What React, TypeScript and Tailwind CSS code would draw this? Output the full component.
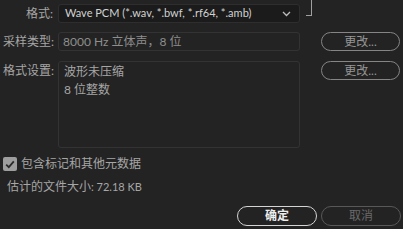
import React from "react";

const font = { fontFamily: 'Lato, "Noto Sans CJK SC", sans-serif' };

export default function App() {
  return (
    <div className="h-[229px] w-[403px] overflow-hidden bg-[#232323] text-[12px] text-[#a6a6a6]" style={font}>
      <div className="flex h-[27px] items-start pt-[4px]">
        <div className="w-[54px] pr-[1px] text-right leading-[19px]">格式:</div>
        <div className="ml-[4px] flex h-[19px] w-[242px] items-center justify-between whitespace-nowrap rounded-[3px] border border-[#2e2e2e] bg-[#1b1b1b] pl-[6px] pr-[8px] text-[11px] text-[#d2d2d2]">
          <span>Wave PCM (*.wav, *.bwf, *.rf64, *.amb)</span>
          <svg width="9" height="6" viewBox="0 0 9 6" fill="none" stroke="#bdbdbd" strokeWidth="1.3">
            <path d="M1 1l3.5 3.5L8 1" />
          </svg>
        </div>
        <div className="-mt-[4px] ml-[6px] h-[16px] w-[6px] border-b border-r border-[#a0a0a0]" />
      </div>

      <div className="mt-[5px] flex h-[19px] items-center">
        <div className="w-[55px] pl-[3px] leading-[19px]">采样类型:</div>
        <div className="ml-[3px] flex h-[19px] w-[242px] items-center whitespace-nowrap rounded-[3px] border border-[#333] pl-[4px] text-[#8e8e8e]">
          8000 Hz 立体声，8 位
        </div>
        <button className="ml-[21px] h-[19px] w-[79px] rounded-full border-[1.5px] border-[#858585] text-[#959595]">
          更改...
        </button>
      </div>

      <div className="mt-[10px] flex items-start">
        <div className="w-[55px] pl-[3px] pt-[1px] leading-[18px]">格式设置:</div>
        <div className="ml-[3px] h-[87px] w-[242px] rounded-[3px] border border-[#333] pl-[5px] pt-[1px] leading-[18px] text-[#a6a6a6]">
          <div>波形未压缩</div>
          <div>8 位整数</div>
        </div>
        <button className="ml-[21px] h-[19px] w-[79px] rounded-full border-[1.5px] border-[#858585] text-[#959595]">
          更改...
        </button>
      </div>

      <div className="mt-[8px] flex items-center pl-[3px]">
        <div className="flex h-[14px] w-[14px] items-center justify-center rounded-[2px] bg-[#9e9e9e]">
          <svg width="10" height="9" viewBox="0 0 10 9" fill="none" stroke="#2a2a2a" strokeWidth="1.8">
            <path d="M1.2 4.6l2.6 2.6L8.8 1.4" />
          </svg>
        </div>
        <span className="ml-[4px] leading-[16px]">包含标记和其他元数据</span>
      </div>

      <div className="mt-[7px] pl-[7px] leading-[16px]">
        估计的文件大小<span className="text-[11px]">: 72.18 KB</span>
      </div>

      <div className="mt-[11px] flex justify-end pr-[2px]">
        <button className="h-[20px] w-[80px] rounded-full border-[1.5px] border-[#d4d4d4] font-bold text-[#eeeeee]">
          确定
        </button>
        <button className="ml-[4px] h-[20px] w-[80px] rounded-full border-[1.5px] border-[#585858] text-[#6a6a6a]">
          取消
        </button>
      </div>
    </div>
  );
}
